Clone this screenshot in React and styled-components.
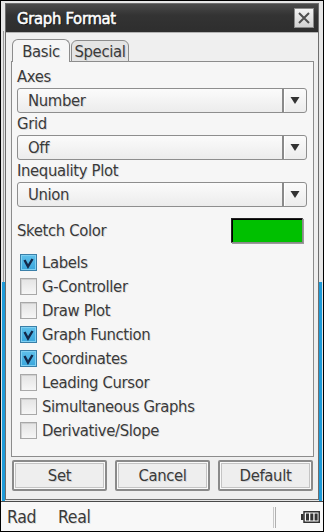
import React from "react";
import styled, { createGlobalStyle } from "styled-components";

const GlobalStyle = createGlobalStyle`
  html, body {
    margin: 0;
    padding: 0;
    background: #ffffff;
  }
  * {
    box-sizing: border-box;
  }
`;

const FONT = `"DejaVu Sans Condensed", "DejaVu Sans", "Liberation Sans Narrow", sans-serif`;

const Screen = styled.div`
  width: 324px;
  height: 532px;
  border: 1px solid #000;
  display: flex;
  flex-direction: column;
  background: #ececec;
  font-family: ${FONT};
  font-stretch: condensed;
  color: #3a3a3a;
  letter-spacing: -0.35px;
`;

const Workspace = styled.div`
  flex: 1;
  display: flex;
  padding: 2px 4px 1px 4px;
  background:
    linear-gradient(#1d9ad8, #1d9ad8) 1px 281px / 3px 219px no-repeat,
    linear-gradient(#1d9ad8, #1d9ad8) 318px 281px / 3px 219px no-repeat,
    linear-gradient(#9a9a9a, #9a9a9a) 2px 30px / 1px 251px no-repeat,
    #e6e6e6;
`;

const Dialog = styled.div`
  flex: 1;
  display: flex;
  flex-direction: column;
  border: 1px solid #6e6e6e;
  background: #efefef;
`;

const TitleBar = styled.div`
  height: 29px;
  display: flex;
  align-items: center;
  justify-content: space-between;
  padding: 0 4px 0 11px;
  background: linear-gradient(#4a4a4a, #333 40%, #2e2e2e);
  border-bottom: 1px solid #b4b4b4;
`;

const Title = styled.span`
  color: #fff;
  font-size: 16.5px;
  letter-spacing: -0.3px;
  -webkit-text-stroke: 0.5px #fff;
  text-shadow: 1px 1px 0 #111;
`;

const CloseButton = styled.div`
  width: 20px;
  height: 20px;
  display: flex;
  align-items: center;
  justify-content: center;
  border: 1px solid #8a8a8a;
  background: linear-gradient(#f4f4f4, #d2d2d2);
`;

const Body = styled.div`
  flex: 1;
  display: flex;
  flex-direction: column;
  padding: 6px 4px 0 5px;
`;

const Tabs = styled.div`
  display: flex;
  gap: 1px;
  padding-left: 1px;
  height: 23px;
  position: relative;
  z-index: 1;
`;

const Tab = styled.div`
  width: 58px;
  height: ${(p) => (p.$active ? "23px" : "22px")};
  margin-top: ${(p) => (p.$active ? "0" : "1px")};
  display: flex;
  align-items: center;
  justify-content: center;
  border: 1px solid #8c8c8c;
  border-bottom: ${(p) => (p.$active ? "none" : "1px solid #8c8c8c")};
  border-radius: 6px 6px 0 0;
  background: ${(p) => (p.$active ? "#f6f6f6" : "#e4e4e4")};
  font-size: 16.5px;
  text-shadow: 1px 1px 0 rgba(0, 0, 0, 0.12);
`;

const Panel = styled.div`
  height: 396px;
  margin-top: -1px;
  border: 1px solid #8c8c8c;
  background: #f6f6f6;
  padding: 4px 6px 0 5px;
  display: flex;
  flex-direction: column;
`;

const FieldLabel = styled.div`
  height: 22px;
  line-height: 22px;
  font-size: 16.5px;
  text-shadow: 1px 1px 0 rgba(0, 0, 0, 0.12);
`;

const SelectBox = styled.div`
  height: 25px;
  display: flex;
  border: 1px solid #8e8e8e;
  border-radius: 3px;
  background: linear-gradient(#fbfbfb, #ececec);
`;

const SelectValue = styled.div`
  flex: 1;
  padding-left: 10px;
  display: flex;
  align-items: center;
  font-size: 16.5px;
  text-shadow: 1px 1px 0 rgba(0, 0, 0, 0.12);
`;

const SelectArrow = styled.div`
  width: 24px;
  display: flex;
  align-items: center;
  justify-content: center;
  border-left: 2px solid #8a8a8a;
  box-shadow: inset 1px 0 0 #fff;
`;

const ColorRow = styled.div`
  height: 26px;
  margin-top: 10px;
  display: flex;
  align-items: center;
  justify-content: space-between;
  padding-right: 4px;
  font-size: 16.5px;
  text-shadow: 1px 1px 0 rgba(0, 0, 0, 0.12);
`;

const Swatch = styled.div`
  width: 72px;
  height: 25px;
  border: 1px solid #8a8a8a;
  border-top-color: #222;
  border-left-color: #222;
  box-shadow: 1px 1px 0 #9a9a9a, inset 1px 1px 0 #000;
  background: ${(p) => p.$color};
`;

const CheckList = styled.div`
  margin-top: 7px;
  display: flex;
  flex-direction: column;
`;

const CheckRow = styled.div`
  height: 24px;
  display: flex;
  align-items: center;
  gap: 5px;
  padding-left: 3px;
  font-size: 16.5px;
  text-shadow: 1px 1px 0 rgba(0, 0, 0, 0.12);
`;

const Box = styled.div`
  width: 17px;
  height: 17px;
  display: flex;
  align-items: center;
  justify-content: center;
  border: 1px solid ${(p) => (p.$checked ? "#3a7fa8" : "#a8a8a8")};
  background: ${(p) =>
    p.$checked
      ? "linear-gradient(#5fc0ea, #3aa6dc)"
      : "linear-gradient(#e4e4e4, #f6f6f6)"};
  box-shadow: ${(p) =>
    p.$checked ? "inset 0 0 0 1px #7fd0f2" : "inset 1px 1px 0 #d0d0d0"};
`;

const ButtonRow = styled.div`
  margin-top: 3px;
  padding-left: 1px;
  display: grid;
  grid-template-columns: repeat(3, 95px);
  gap: 8px;
`;

const Button = styled.div`
  height: 31px;
  display: flex;
  align-items: center;
  justify-content: center;
  border: 2px solid #8a8a8a;
  border-radius: 2px;
  box-shadow: inset 0 0 0 1px #fafafa, inset 0 0 0 2px #c4c4c4;
  background: #eeeeee;
  font-size: 16.5px;
  text-shadow: 1px 1px 0 rgba(0, 0, 0, 0.12);
`;

const StatusBar = styled.div`
  height: 30px;
  border-top: 1px solid #4a4a4a;
  background: #f8f8f8;
  display: flex;
  align-items: center;
  padding: 1px 3px 0 6px;
  font-size: 17.5px;
`;

const StatusText = styled.span`
  width: ${(p) => p.$w}px;
  text-shadow: 1px 1px 0 rgba(0, 0, 0, 0.12);
`;

const StatusSpacer = styled.div`
  flex: 1;
`;

const Divider = styled.div`
  width: 3px;
  height: 21px;
  border-left: 1px solid #c8c8c8;
  border-right: 1px solid #b0b0b0;
  margin-right: 25px;
`;

const Arrow = () => (
  <svg width="10" height="9" viewBox="0 0 10 9">
    <path d="M0.5 1 H9.5 L5 8 Z" fill="#333" />
  </svg>
);

const Check = () => (
  <svg width="15" height="15" viewBox="0 0 15 15">
    <path d="M3.5 5 L7 11.5 L11.5 4" stroke="#14294a" strokeWidth="2.4" fill="none" />
  </svg>
);

const CloseX = () => (
  <svg width="14" height="14" viewBox="0 0 14 14">
    <path d="M2 2 L12 12 M12 2 L2 12" stroke="#505050" strokeWidth="2" />
  </svg>
);

const Battery = () => (
  <svg width="19" height="12" viewBox="0 0 19 12">
    <rect x="0" y="3" width="2.5" height="6" fill="#333" />
    <rect x="3" y="0.75" width="15.25" height="10.5" fill="none" stroke="#333" strokeWidth="1.5" />
    <rect x="5" y="2.5" width="3" height="7" fill="#333" />
    <rect x="9.3" y="2.5" width="3" height="7" fill="#333" />
    <rect x="13.6" y="2.5" width="3" height="7" fill="#333" />
  </svg>
);

const selects = [
  { label: "Axes", value: "Number" },
  { label: "Grid", value: "Off" },
  { label: "Inequality Plot", value: "Union" },
];

const options = [
  { label: "Labels", checked: true },
  { label: "G-Controller", checked: false },
  { label: "Draw Plot", checked: false },
  { label: "Graph Function", checked: true },
  { label: "Coordinates", checked: true },
  { label: "Leading Cursor", checked: false },
  { label: "Simultaneous Graphs", checked: false },
  { label: "Derivative/Slope", checked: false },
];

export default function App() {
  return (
    <>
      <GlobalStyle />
      <Screen>
        <Workspace>
          <Dialog>
            <TitleBar>
              <Title>Graph Format</Title>
              <CloseButton>
                <CloseX />
              </CloseButton>
            </TitleBar>
            <Body>
              <Tabs>
                <Tab $active>Basic</Tab>
                <Tab>Special</Tab>
              </Tabs>
              <Panel>
                {selects.map((s) => (
                  <React.Fragment key={s.label}>
                    <FieldLabel>{s.label}</FieldLabel>
                    <SelectBox>
                      <SelectValue>{s.value}</SelectValue>
                      <SelectArrow>
                        <Arrow />
                      </SelectArrow>
                    </SelectBox>
                  </React.Fragment>
                ))}
                <ColorRow>
                  <span>Sketch Color</span>
                  <Swatch $color="#00c000" />
                </ColorRow>
                <CheckList>
                  {options.map((o) => (
                    <CheckRow key={o.label}>
                      <Box $checked={o.checked}>{o.checked && <Check />}</Box>
                      {o.label}
                    </CheckRow>
                  ))}
                </CheckList>
              </Panel>
              <ButtonRow>
                <Button>Set</Button>
                <Button>Cancel</Button>
                <Button>Default</Button>
              </ButtonRow>
            </Body>
          </Dialog>
        </Workspace>
        <StatusBar>
          <StatusText $w={51}>Rad</StatusText>
          <StatusText $w={40}>Real</StatusText>
          <StatusSpacer />
          <Divider />
          <Battery />
        </StatusBar>
      </Screen>
    </>
  );
}
